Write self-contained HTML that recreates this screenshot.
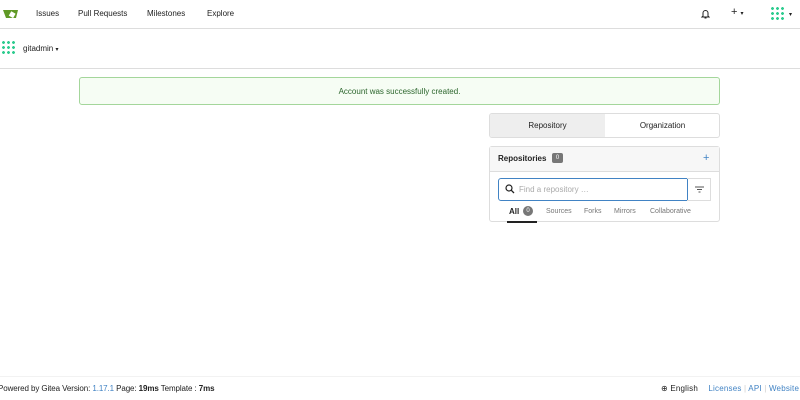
<!DOCTYPE html>
<html><head><style>
*{box-sizing:border-box;margin:0;padding:0}
body{width:800px;height:400px;overflow:hidden;background:#fff;font-family:"Liberation Sans",sans-serif;font-size:8px;color:#222;position:relative}
.a{position:absolute}
.nav{top:0;left:0;width:800px;height:29px;border-bottom:1px solid #ddd}
.nav span{position:absolute;top:9px;font-size:8px;color:#222}
.hdr{top:29px;left:0;width:800px;height:40px;border-bottom:1px solid #ddd}
.flash{left:79px;top:77px;width:641px;height:28px;background:#f6fdf4;border:1px solid #a4d69b;border-radius:3px;color:#2c662d;text-align:center;line-height:27px;font-size:8px}
.ident{background-image:radial-gradient(#2ecc90 40%,transparent 42%);background-size:5px 5px}
</style></head><body>
<div class="a nav">
 <svg class="a" style="left:2px;top:7px" width="17" height="14" viewBox="0 0 17 14"><path d="M1 3h15l-2 8H4z" fill="#609926"/><rect x="8" y="5" width="5" height="5" fill="#fff" transform="rotate(30 10 7)"/></svg>
 <span style="left:36px">Issues</span>
 <span style="left:78px">Pull Requests</span>
 <span style="left:147px">Milestones</span>
 <span style="left:207px">Explore</span>
 <svg class="a" style="left:701px;top:9px" width="9" height="10" viewBox="0 0 9 10"><path d="M2 7V4a2.5 2.5 0 015 0v3l1 1H1z M3.5 9h2" fill="none" stroke="#222" stroke-width="1"/></svg>
 <span style="left:731px;font-size:11px;top:6px">+ <span style="font-size:6px;position:static">▾</span></span>
 <div class="a ident" style="left:770px;top:6px;width:14px;height:14px"></div>
 <span style="left:789px;font-size:6px;top:11px">▾</span>
</div>
<div class="a hdr">
 <div class="a ident" style="left:1px;top:11px;width:16px;height:16px"></div>
 <span class="a" style="left:23px;top:15px">gitadmin <span style="font-size:6px">▾</span></span>
</div>
<div class="a flash">Account was successfully created.</div>
<div class="a" style="left:489px;top:113px;width:231px;height:25px;border:1px solid #ddd;border-radius:3px;overflow:hidden">
 <div class="a" style="left:0;top:0;width:115px;height:24px;background:#eee;text-align:center;line-height:24px">Repository</div>
 <div class="a" style="left:115px;top:0;width:115px;height:24px;text-align:center;line-height:24px">Organization</div>
</div>
<div class="a" style="left:489px;top:146px;width:231px;height:76px;border:1px solid #ddd;border-radius:3px">
 <div class="a" style="left:0;top:0;width:229px;height:25px;background:#f7f7f7;border-bottom:1px solid #ddd"></div>
 <span class="a" style="left:8px;top:7px;font-weight:bold">Repositories</span>
 <span class="a" style="left:62px;top:6px;width:11px;height:10px;background:#777;color:#fff;font-size:6px;text-align:center;line-height:10px;border-radius:2px">0</span>
 <span class="a" style="left:213px;top:5px;font-size:11px;color:#4183c4">+</span>
 <div class="a" style="left:8px;top:31px;width:190px;height:23px;border:1px solid #4183c4;border-radius:3px 0 0 3px"></div>
 <div class="a" style="left:197px;top:31px;width:24px;height:23px;border:1px solid #ddd;border-left:none"></div>
 <svg class="a" style="left:15px;top:37px" width="10" height="10" viewBox="0 0 10 10"><circle cx="4" cy="4" r="3" fill="none" stroke="#222" stroke-width="1.2"/><path d="M6.2 6.2L9 9" stroke="#222" stroke-width="1.3"/></svg>
 <span class="a" style="left:29px;top:38px;color:#aaa">Find a repository …</span>
 <svg class="a" style="left:205px;top:39px" width="9" height="7" viewBox="0 0 9 7"><path d="M0 1h9M2 3.5h5M3.5 6h2" stroke="#555" stroke-width="1"/></svg>
 <span class="a" style="left:19px;top:60px;font-weight:bold">All</span>
 <span class="a" style="left:33px;top:59px;width:10px;height:10px;border-radius:5px;background:#777;color:#fff;font-size:6px;text-align:center;line-height:10px">0</span>
 <div class="a" style="left:17px;top:74px;width:30px;height:2px;background:#222"></div>
 <span class="a" style="left:56px;top:61px;color:#777;font-size:7px">Sources</span>
 <span class="a" style="left:94px;top:61px;color:#777;font-size:7px">Forks</span>
 <span class="a" style="left:124px;top:61px;color:#777;font-size:7px">Mirrors</span>
 <span class="a" style="left:160px;top:61px;color:#777;font-size:7px">Collaborative</span>
</div>
<div class="a" style="left:0;top:376px;width:800px;height:24px;background:#fff;border-top:1px solid #f2f2f2"></div>
<span class="a" style="left:-2px;top:384px;letter-spacing:-0.1px">Powered by Gitea Version: <span style="color:#4183c4">1.17.1</span> Page: <b>19ms</b> Template : <b>7ms</b></span>
<span class="a" style="left:661px;top:384px;letter-spacing:0.2px">⊕ English <span style="color:#4183c4;margin-left:8px">Licenses</span> <span style="color:#ccc">|</span> <span style="color:#4183c4">API</span> <span style="color:#ccc">|</span> <span style="color:#4183c4">Website</span></span>
</body></html>
